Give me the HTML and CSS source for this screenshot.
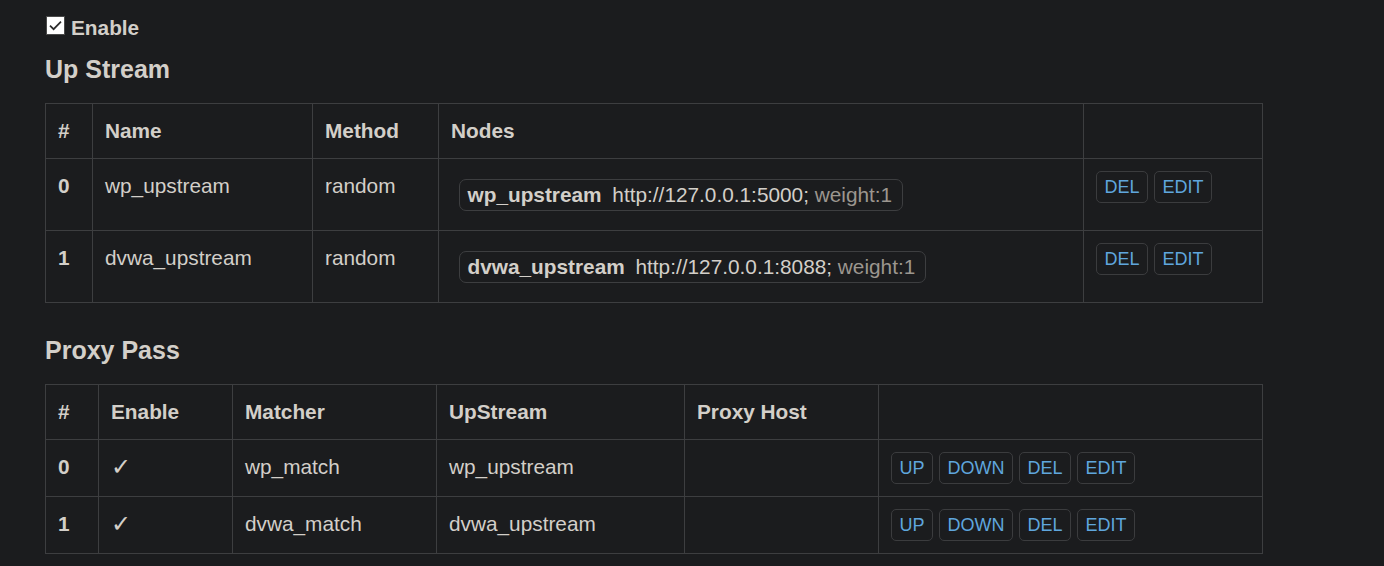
FILE: index.html
```html
<!DOCTYPE html>
<html>
<head>
<meta charset="utf-8">
<link rel="stylesheet" href="styles.css">
</head>
<body>
<div class="page">
  <label class="enable">
    <span class="checkbox"><svg viewBox="0 0 17 17" width="17" height="17"><path d="M3 8.6 L6.6 12.2 L14 4.6" fill="none" stroke="#2b2b2b" stroke-width="1.7"/></svg></span>
    <span>Enable</span>
  </label>

  <h2 class="title">Up Stream</h2>
  <table class="grid">
    <colgroup>
      <col style="width:47px"><col style="width:220px"><col style="width:126px"><col style="width:645px"><col style="width:179px">
    </colgroup>
    <thead>
      <tr><th>#</th><th>Name</th><th>Method</th><th>Nodes</th><th></th></tr>
    </thead>
    <tbody>
      <tr>
        <td class="idx">0</td><td>wp_upstream</td><td>random</td>
        <td><div class="nodes"><span class="node"><b class="node-name">wp_upstream</b> http://127.0.0.1:5000; <span class="weight">weight:1</span></span></div></td>
        <td><div class="actions"><button class="btn">DEL</button><button class="btn">EDIT</button></div></td>
      </tr>
      <tr>
        <td class="idx">1</td><td>dvwa_upstream</td><td>random</td>
        <td><div class="nodes"><span class="node"><b class="node-name">dvwa_upstream</b> http://127.0.0.1:8088; <span class="weight">weight:1</span></span></div></td>
        <td><div class="actions"><button class="btn">DEL</button><button class="btn">EDIT</button></div></td>
      </tr>
    </tbody>
  </table>

  <h2 class="title second">Proxy Pass</h2>
  <table class="grid">
    <colgroup>
      <col style="width:53px"><col style="width:134px"><col style="width:204px"><col style="width:248px"><col style="width:194px"><col style="width:384px">
    </colgroup>
    <thead>
      <tr><th>#</th><th>Enable</th><th>Matcher</th><th>UpStream</th><th>Proxy Host</th><th></th></tr>
    </thead>
    <tbody>
      <tr>
        <td class="idx">0</td><td class="check">✓</td><td>wp_match</td><td>wp_upstream</td><td></td>
        <td><div class="actions"><button class="btn">UP</button><button class="btn">DOWN</button><button class="btn">DEL</button><button class="btn">EDIT</button></div></td>
      </tr>
      <tr>
        <td class="idx">1</td><td class="check">✓</td><td>dvwa_match</td><td>dvwa_upstream</td><td></td>
        <td><div class="actions"><button class="btn">UP</button><button class="btn">DOWN</button><button class="btn">DEL</button><button class="btn">EDIT</button></div></td>
      </tr>
    </tbody>
  </table>
</div>
</body>
</html>
```
FILE: styles.css
```css
html, body {
  margin: 0;
  background: #1b1c1e;
}
body {
  font-family: "Liberation Sans", Arial, sans-serif;
  font-size: 20.8px;
  line-height: 30px;
  color: #d3cfc9;
}
.page {
  padding: 13px 0 0 45px;
}
.enable {
  display: flex;
  align-items: center;
  gap: 6px;
  font-weight: bold;
  height: 30px;
}
.checkbox {
  width: 19px;
  height: 19px;
  box-sizing: border-box;
  background: #ffffff;
  border: 1px solid #4a4a4a;
  display: flex;
  align-items: center;
  justify-content: center;
  margin-left: 1px;
  margin-top: -5px;
}
.checkbox svg {
  display: block;
}
.title {
  font-size: 25px;
  line-height: 36px;
  font-weight: bold;
  margin: 8px 0 16px 0;
}
.title.second {
  margin-top: 29px;
}
.grid {
  border-collapse: collapse;
  table-layout: fixed;
  width: 1217px;
}
.grid th, .grid td {
  border: 1px solid #3d3e40;
  padding: 12px;
  text-align: left;
  vertical-align: top;
  line-height: 30px;
}
.grid th {
  font-weight: bold;
}
.idx {
  font-weight: bold;
}
.check {
  font-family: "DejaVu Sans", sans-serif;
  font-size: 24px;
  font-weight: 200;
}
.nodes {
  line-height: 30px;
}
.node {
  display: inline-block;
  vertical-align: top;
  margin: 7.5px;
  padding: 0 10px 0 8px;
  border: 1px solid #3d3e40;
  border-radius: 7px;
  line-height: 30px;
  white-space: nowrap;
}
.node-name {
  margin-right: 5px;
}
.weight {
  color: #9b968f;
}
.actions {
  display: flex;
  gap: 6px;
}
.btn {
  font-family: "Liberation Sans", Arial, sans-serif;
  font-size: 18px;
  line-height: 30px;
  height: 32px;
  padding: 0 7.5px;
  background: #1b1c1e;
  color: #5fa6dd;
  border: 1px solid #3b3c3e;
  border-radius: 5px;
  margin: 0;
}
```
